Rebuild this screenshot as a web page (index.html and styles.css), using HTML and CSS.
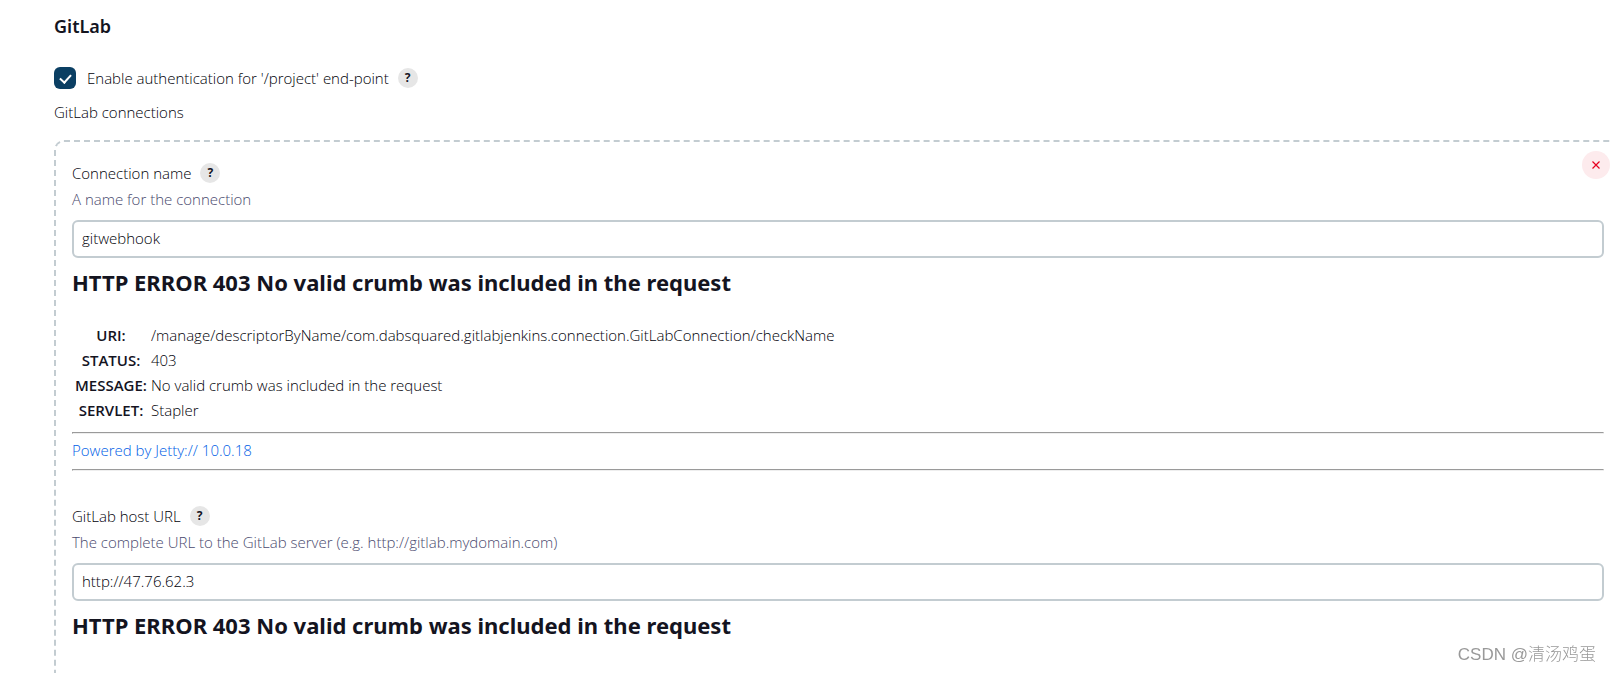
FILE: index.html
```
<!DOCTYPE html>
<html lang="en">

<head>
	<meta charset="UTF-8">
	<meta name="viewport" content="width=device-width, initial-scale=1.0">
	<title>GitLab configuration</title>
	<link rel="stylesheet" href="styles.css">
</head>

<body>
	<main class="config">
		<h2 class="section-title">GitLab</h2>

		<div class="checkbox-row">
			<input type="checkbox" id="auth" checked>
			<label for="auth">Enable authentication for '/project' end-point</label>
			<button class="help" type="button">?</button>
		</div>

		<div class="list-title">GitLab connections</div>

		<div class="chunk">
			<button class="delete" type="button" aria-label="Delete">
				<svg width="10" height="10" viewBox="0 0 10 10">
					<path d="M1.5 1.5l7 7M8.5 1.5l-7 7" fill="none" stroke="currentColor" stroke-width="1.2" />
				</svg>
			</button>

			<div class="item">
				<div class="item-label">
					<label for="name">Connection name</label>
					<button class="help" type="button">?</button>
				</div>
				<div class="description">A name for the connection</div>
				<input class="text-input" type="text" id="name" value="gitwebhook">
				<div class="error">
					<h2>HTTP ERROR 403 No valid crumb was included in the request</h2>
					<table>
						<tr>
							<th>URI:</th>
							<td>/manage/descriptorByName/com.dabsquared.gitlabjenkins.connection.GitLabConnection/checkName</td>
						</tr>
						<tr>
							<th>STATUS:</th>
							<td>403</td>
						</tr>
						<tr>
							<th>MESSAGE:</th>
							<td>No valid crumb was included in the request</td>
						</tr>
						<tr>
							<th>SERVLET:</th>
							<td>Stapler</td>
						</tr>
					</table>
					<hr>
					<a href="#">Powered by Jetty:// 10.0.18</a>
					<hr>
				</div>
			</div>

			<div class="item">
				<div class="item-label">
					<label for="url">GitLab host URL</label>
					<button class="help" type="button">?</button>
				</div>
				<div class="description">The complete URL to the GitLab server (e.g. http://gitlab.mydomain.com)</div>
				<input class="text-input" type="text" id="url" value="http://47.76.62.3">
				<div class="error">
					<h2>HTTP ERROR 403 No valid crumb was included in the request</h2>
				</div>
			</div>
		</div>
	</main>
	<div class="watermark">CSDN @清汤鸡蛋</div>
</body>

</html>
```
FILE: styles.css
```
:root {
	--text: #14141f;
	--label: #000008;
	--muted: #4a4a6e;
	--border: #c3ccd1;
	--primary: #0b3f63;
	--link: #0060e6;
	--red: #e6001f;
}

* {
	box-sizing: border-box;
}

body {
	margin: 0;
	overflow-x: hidden;
	background: #fff;
	color: var(--label);
	font-family: 'Open Sans', 'Noto Sans CJK SC', sans-serif;
	font-size: 15px;
	font-weight: 300;
	line-height: 22px;
}

/* the list runs on past the right edge of the window */
.config {
	display: flex;
	flex-direction: column;
	min-height: 100vh;
	margin-left: 54px;
	margin-right: -12px;
	padding-top: 14px;
}

h2 {
	margin: 0;
	color: var(--text);
	font-family: 'Noto Sans', sans-serif;
	font-weight: 700;
}

.section-title {
	margin-bottom: 29px;
	font-size: 18px;
	font-weight: 600;
	line-height: 24px;
}

.checkbox-row {
	display: flex;
	align-items: center;
	margin-bottom: 12px;
}

.checkbox-row input {
	appearance: none;
	display: grid;
	place-items: center;
	width: 22px;
	height: 22px;
	margin: 0 11px 0 0;
	border-radius: 6px;
	background: var(--primary);
}

.checkbox-row input::before {
	content: "";
	width: 5px;
	height: 9px;
	margin-bottom: 2px;
	border: solid #fff;
	border-width: 0 2px 2px 0;
	transform: rotate(42deg);
}

.help {
	width: 20px;
	height: 20px;
	margin-left: 9px;
	padding: 0;
	border: 0;
	border-radius: 50%;
	background: #e6e6e6;
	color: var(--text);
	font: 700 12px/20px 'Noto Sans', sans-serif;
}

.list-title {
	margin-bottom: 17px;
}

.chunk {
	position: relative;
	flex: 1;
	padding: 20px 16px 0;
	border: 2px dashed var(--border);
	border-bottom: 0;
	border-radius: 10px 10px 0 0;
}

.delete {
	position: absolute;
	top: 9px;
	right: 10px;
	display: grid;
	place-items: center;
	width: 28px;
	height: 28px;
	padding: 0;
	border: 0;
	border-radius: 50%;
	background: #fdebed;
	color: var(--red);
}

.item + .item {
	margin-top: 34px;
}

.item-label {
	display: flex;
	align-items: center;
}

.description {
	margin: 4px 0 10px;
	color: var(--muted);
}

.text-input {
	display: block;
	width: 100%;
	height: 38px;
	padding: 0 8px 2px;
	border: 2px solid var(--border);
	border-radius: 6px;
	background: #fff;
	color: var(--label);
	font: inherit;
}

.error h2 {
	margin: 7px 0 23px;
	font-size: 22px;
	line-height: 34px;
}

.error table {
	border-spacing: 2px;
}

.error th,
.error td {
	padding: 1px;
	line-height: 21px;
}

.error th {
	min-width: 74px;
	color: var(--text);
	font-weight: 600;
	text-align: center;
}

.error hr {
	margin: 8px 0;
	border: 1px solid #9a9a9a;
	border-color: #9a9a9a #eee #eee #9a9a9a;
}

.error a {
	display: block;
	margin: -2px 0 9px;
	color: var(--link);
	line-height: 20px;
	text-decoration: none;
}

.watermark {
	position: fixed;
	right: 14px;
	bottom: 6px;
	color: #999;
	font-family: 'Liberation Sans', 'Noto Sans CJK SC', sans-serif;
	font-size: 17px;
	font-weight: 300;
	line-height: 24px;
}
```
